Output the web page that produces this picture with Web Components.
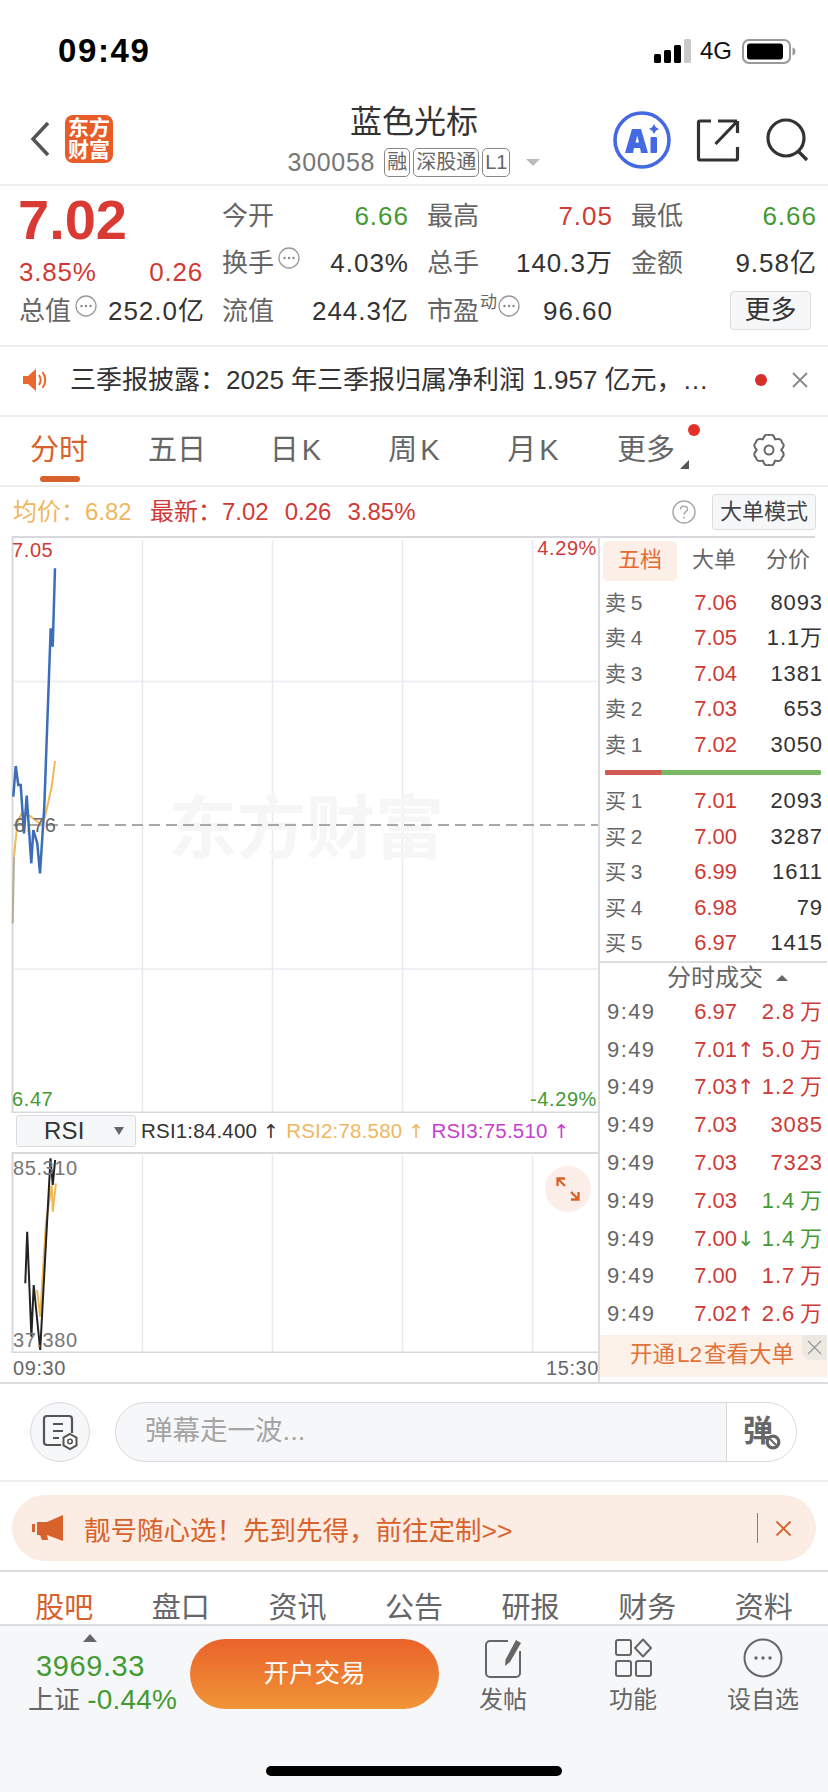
<!DOCTYPE html>
<html lang="zh">
<head>
<meta charset="utf-8">
<title>蓝色光标</title>
<style>
  html, body { margin: 0; padding: 0; background: #fff; }
  body { width: 828px; height: 1792px; overflow: hidden; font-family: "Liberation Sans", "Noto Sans CJK SC", sans-serif; color: #333; }
</style>
</head>
<body>
<status-bar></status-bar>
<stock-header></stock-header>
<quote-panel></quote-panel>
<notice-bar></notice-bar>
<period-tabs></period-tabs>
<info-row></info-row>
<chart-area>
  <trend-chart slot="left"></trend-chart>
  <order-panel slot="right"></order-panel>
</chart-area>
<comment-bar></comment-bar>
<promo-banner></promo-banner>
<section-tabs></section-tabs>
<bottom-bar></bottom-bar>

<script>
const RED = '#cf3a36';
const GREEN = '#449a33';
const ORANGE = '#d8622b';
const FONT = `"Liberation Sans", "Noto Sans CJK SC", sans-serif`;
const ARROW = `"DejaVu Sans", sans-serif`;

// base: pone estilos + markup en el shadow root
class ShadowPart extends HTMLElement {
    connectedCallback() {
        if (!this.shadowRoot) this.attachShadow({ mode: 'open' });
        this.shadowRoot.innerHTML = `<style>*{box-sizing:border-box} :host{display:block;box-sizing:border-box;font-family:${FONT};}${this.css()}</style>${this.html()}`;
    }
    css() { return ''; }
    html() { return ''; }
}

class StatusBar extends ShadowPart {
    css() { return `
        :host { height: 96px; display: flex; align-items: flex-start; justify-content: space-between; padding: 33px 32px 0 58px; }
        .time { font-size: 33px; font-weight: 700; color: #000; line-height: 36px; letter-spacing: 1.6px; }
        .right { display: flex; align-items: center; gap: 9px; height: 36px; }
        .net { font-size: 24px; color: #111; width: 33px; }
    `; }
    html() { return `
        <div class="time">09:49</div>
        <div class="right">
            <svg width="37" height="25" viewBox="0 0 37 25"><rect x="0" y="15" width="7" height="9" rx="1.5" fill="#000"/><rect x="10" y="11" width="7" height="13" rx="1.5" fill="#000"/><rect x="20" y="6" width="7" height="18" rx="1.5" fill="#000"/><rect x="30" y="0" width="7" height="24" rx="1.5" fill="#c9c9c9"/></svg>
            <span class="net">4G</span>
            <svg width="54" height="25" viewBox="0 0 54 25"><rect x="1" y="1" width="47" height="23" rx="6" fill="none" stroke="#999" stroke-width="2"/><rect x="5" y="4.5" width="36" height="16" rx="3" fill="#000"/><path d="M50.5 8.5c2 .5 3 2 3 4s-1 3.500-3 4z" fill="#999"/></svg>
        </div>
    `; }
}

class StockHeader extends ShadowPart {
    css() { return `
        :host { height: 90px; border-bottom: 2px solid #eee; display: flex; padding: 0 18px 0 28px; }
        .left { display: flex; align-items: center; gap: 13px; width: 182px; height: 88px; margin-top: -1px; }
        .logo { width: 48px; height: 48px; background: #e85c29; border-radius: 8px; color: #fff; font-size: 21px; line-height: 22px; font-weight: 700; text-align: center; padding-top: 2px; }
        .mid { flex: 1; text-align: center; }
        .title { font-size: 32px; line-height: 44px; color: #333; margin-top: 4px; }
        .sub { display: flex; align-items: center; justify-content: center; gap: 3px; height: 34px; margin-top: 1px; font-size: 25px; color: #777; letter-spacing: .7px; }
        .tag { border: 1px solid #888; border-radius: 5px; height: 29px; line-height: 26px; padding: 0 2px; font-size: 20px; color: #666; letter-spacing: 0; }
        .code { margin-right: 6px; }
        .caret { width: 0; height: 0; border: 7px solid transparent; border-top: 7px solid #bbb; border-bottom: 0; margin-left: 13px; }
        .right { width: 192px; height: 88px; }
        .right svg { overflow: visible; }
    `; }
    html() { return `
        <div class="left">
            <svg width="24" height="36" viewBox="0 0 24 36"><path d="M20 2 5 18l15 16" fill="none" stroke="#555" stroke-width="3.5"/></svg>
            <div class="logo">东方<br>财富</div>
        </div>
        <div class="mid">
            <div class="title">蓝色光标</div>
            <div class="sub"><span class="code">300058</span><span class="tag">融</span><span class="tag">深股通</span><span class="tag">L1</span><span class="caret"></span></div>
        </div>
        <div class="right">
            <svg width="192" height="88" viewBox="0 0 192 88">
                <circle cx="24" cy="44" r="27" fill="none" stroke="#4569e2" stroke-width="3.600"/>
                <path d="M7 57 14 33h9l7 24h-7l-1-5h-6l-1 5zM17.500 46.500h3.500l-1.800-7z" fill="#4569e2" fill-rule="evenodd"/>
                <rect x="32.500" y="41" width="6.500" height="16" rx="1" fill="#4569e2"/>
                <path d="M36 28l1.800 3.200 3.200 1.800-3.200 1.800-1.800 3.200-1.800-3.200-3.200-1.800 3.200-1.800z" fill="#4569e2"/>
                <path d="M93 25H82a1.500 1.500 0 0 0-1.500 1.500v36a1.500 1.500 0 0 0 1.500 1.500h36a1.500 1.500 0 0 0 1.500-1.500V51" fill="none" stroke="#333" stroke-width="3.200"/>
                <path d="M119.500 25v12M100 25h19M119.500 25l-22 23" fill="none" stroke="#333" stroke-width="3.200"/>
                <circle cx="168" cy="42" r="18" fill="none" stroke="#333" stroke-width="3.200"/>
                <path d="M180 55l9 9" stroke="#333" stroke-width="3.200"/>
            </svg>
        </div>
    `; }
}

const dots = `<svg class="dots" width="22" height="22" viewBox="0 0 22 22"><circle cx="11" cy="11" r="10" fill="none" stroke="#999" stroke-width="1.300"/><circle cx="6.500" cy="11" r="1.200" fill="#888"/><circle cx="11" cy="11" r="1.200" fill="#888"/><circle cx="15.500" cy="11" r="1.200" fill="#888"/></svg>`;

class QuotePanel extends ShadowPart {
    css() { return `
        :host { height: 161px; border-bottom: 2px solid #eee; display: flex; padding-left: 19px; font-size: 26px; line-height: 32px; }
        .left { width: 184px; }
        .price { font-size: 56px; font-weight: 700; color: #d93a33; line-height: 68px; height: 68px; margin-left: -1px; }
        .chg { display: flex; justify-content: space-between; color: ${RED}; height: 36px; line-height: 36px; letter-spacing: .8px; }
        .total { display: flex; align-items: center; height: 42px; }
        .grid { display: grid; grid-template-columns: 185px 184px 184px; column-gap: 20px; grid-auto-rows: 47.5px; padding-top: 6px; margin-left: 19px; }
        .cell { display: flex; align-items: center; }
        .lab { color: #666; }
        .val { margin-left: auto; margin-right: -2px; color: #333; letter-spacing: 1px; }
        .dots { margin: -10px 0 0 4px; }
        .sup { font-size: 17px; color: #666; margin: -15px 0 0 1px; }
        .more { margin-left: auto; margin-right: 4px; width: 81px; height: 39px; line-height: 36px; text-align: center; background: #f6f7f9; border: 1px solid #ddd; border-radius: 4px; color: #333; }
    `; }
    html() {
        const c = (l, v, color) => `<div class="cell"><span class="lab">${l}</span><span class="val" style="color:${color || '#333'}">${v}</span></div>`;
        return `
        <div class="left">
            <div class="price">7.02</div>
            <div class="chg"><span>3.85%</span><span>0.26</span></div>
            <div class="total"><span class="lab">总值</span>${dots}<span class="val">252.0亿</span></div>
        </div>
        <div class="grid">
            ${c('今开', '6.66', GREEN)}${c('最高', '7.05', RED)}${c('最低', '6.66', GREEN)}
            <div class="cell"><span class="lab">换手</span>${dots}<span class="val">4.03%</span></div>
            ${c('总手', '140.3万')}${c('金额', '9.58亿')}
            ${c('流值', '244.3亿')}
            <div class="cell"><span class="lab">市盈</span><span class="sup">动</span>${dots.replace('class="dots"', 'class="dots" style="margin-left:1px"')}<span class="val">96.60</span></div>
            <div class="cell"><span class="more">更多</span></div>
        </div>
    `; }
}

class NoticeBar extends ShadowPart {
    css() { return `
        :host { height: 70px; border-bottom: 2px solid #eee; display: flex; align-items: center; padding: 0 19px 3px 22px; font-size: 26px; line-height: 34px; color: #333; }
        .txt { margin-left: 22px; flex: 1; white-space: nowrap; }
        .dot { width: 12px; height: 12px; border-radius: 50%; background: #d92f2a; margin-right: 24px; }
    `; }
    html() { return `
        <svg width="26" height="26" viewBox="0 0 26 26"><path d="M1 9h5l8-7v22l-8-7H1z" fill="#e8682f"/><path d="M17 8c2 3 2 7 0 10M20.500 5c3.500 5 3.500 11 0 16" fill="none" stroke="#e8682f" stroke-width="2"/></svg>
        <span class="txt">三季报披露：2025 年三季报归属净利润 1.957 亿元，…</span>
        <span class="dot"></span>
        <svg width="18" height="18" viewBox="0 0 18 18"><path d="M2 2l14 14M16 2 2 16" stroke="#888" stroke-width="1.800"/></svg>
    `; }
}

// engranaje de 6 lóbulos, radio alterno suavizado
function gearPath() {
    const pt = (r, deg) => {
        const a = deg * Math.PI / 180;
        return `${(16 + r * Math.cos(a)).toFixed(1)} ${(16 + r * Math.sin(a)).toFixed(1)}`;
    };
    let d = `M${pt(12.2, 0)}`;
    for (let i = 0; i < 6; i++) {
        const s = i * 60;
        d += `Q${pt(17.5, s + 16)} ${pt(15, s + 30)}Q${pt(17.5, s + 44)} ${pt(12.2, s + 60)}`;
    }
    return d + 'Z';
}

class PeriodTabs extends ShadowPart {
    css() { return `
        :host { height: 70px; border-bottom: 2px solid #eee; display: grid; grid-template-columns: 118px 118px 119px 118px 120px 106px 1fr; align-items: center; font-size: 29px; color: #666; padding-bottom: 2px; }
        .t { text-align: center; position: relative; line-height: 40px; word-spacing: -5px; }
        .on { color: ${ORANGE}; }
        .on::after { content: ""; position: absolute; left: 40px; top: 46px; width: 40px; height: 6px; border-radius: 3px; background: ${ORANGE}; }
        .badge { position: absolute; left: 95px; top: -6px; width: 12px; height: 12px; border-radius: 50%; background: #e5302a; }
        .corner { position: absolute; left: 87px; top: 30px; width: 0; height: 0; border-left: 9px solid transparent; border-bottom: 9px solid #555; }
        svg { justify-self: start; margin-left: 54px; }
    `; }
    html() { return `
        <div class="t on">分时</div><div class="t">五日</div><div class="t">日 K</div><div class="t">周 K</div><div class="t">月 K</div>
        <div class="t">更多<i class="badge"></i><i class="corner"></i></div>
        <svg width="32" height="32" viewBox="0 0 32 32"><path d="${gearPath()}" fill="none" stroke="#666" stroke-width="2" stroke-linejoin="round"/><circle cx="16" cy="16" r="4.500" fill="none" stroke="#666" stroke-width="2"/></svg>
    `; }
}

class InfoRow extends ShadowPart {
    css() { return `
        :host { height: 49px; display: flex; align-items: center; padding: 0 12px 0 13px; font-size: 24px; line-height: 30px; color: ${RED}; }
        .avg { color: #efb75f; width: 137px; white-space: nowrap; }
        .n { margin-left: 16px; }
        .sp { flex: 1; }
        .btn { width: 104px; height: 36px; line-height: 33px; text-align: center; background: #f6f7f9; border: 1px solid #ddd; border-radius: 4px; color: #444; font-size: 22px; margin-left: 16px; }
    `; }
    html() { return `
        <span class="avg">均价：6.82</span><span>最新：7.02</span><span class="n">0.26</span><span class="n">3.85%</span>
        <span class="sp"></span>
        <svg width="24" height="24" viewBox="0 0 24 24"><circle cx="12" cy="12" r="11" fill="none" stroke="#aaa" stroke-width="1.500"/><path d="M8.500 9.500c0-2 1.500-3.300 3.500-3.300s3.500 1.300 3.500 3c0 2.800-3.500 2.600-3.500 5.300" fill="none" stroke="#aaa" stroke-width="1.500"/><circle cx="12" cy="17.500" r="1" fill="#aaa"/></svg>
        <span class="btn">大单模式</span>
    `; }
}

class ChartArea extends ShadowPart {
    css() { return `:host { display: flex; height: 846px; } ::slotted([slot=left]) { width: 599px; } ::slotted([slot=right]) { width: 229px; }`; }
    html() { return `<slot name="left"></slot><slot name="right"></slot>`; }
}

class TrendChart extends ShadowPart {
    css() { return `
        .main, .rsi { position: relative; }
        .main { height: 577px; }
        .rsi { height: 201px; }
        svg { display: block; }
        .lb { position: absolute; font-size: 20px; line-height: 24px; white-space: nowrap; letter-spacing: .6px; }
        .head { height: 39px; display: flex; align-items: center; padding: 0 0 3px 16px; font-size: 20.500px; letter-spacing: .2px; white-space: nowrap; }
        .sel { width: 120px; height: 32px; background: #f6f7f9; border: 1px solid #ddd; border-radius: 3px; font-size: 24px; color: #333; display: flex; align-items: center; padding-left: 27px; margin-right: 5px; position: relative; }
        .sel::after { content: ""; position: absolute; right: 11px; top: 11px; border: 5px solid transparent; border-top: 8px solid #666; border-bottom: 0; }
        .head span { margin-right: 7px; }
        .head b { font: 400 19px ${ARROW}; }
        .axis { height: 29px; display: flex; justify-content: space-between; padding: 4px 0 0 13px; font-size: 20px; color: #666; letter-spacing: .6px; }
        .exp { position: absolute; left: 545px; top: 14px; width: 46px; height: 46px; border-radius: 50%; background: #fbeee8; display: flex; align-items: center; justify-content: center; }
    `; }
    html() {
        const xs = [142.5, 272.5, 402.5, 532.5];
        const vert = (h, t) => xs.map(x => `<path d="M${x} ${t}V${h}" stroke="#e9e9ef" stroke-width="1.500"/>`).join('');
        const line = (pts, oy, sx, sy) => pts.map(p => `${(p[0] / sx).toFixed(1)},${(p[1] / sy + oy).toFixed(1)}`).join(' ');
        // trazos tomados del recorte ampliado
        const price = line([[40,800],[47,708],[55,765],[62,765],[72,910],[80,797],[94,1000],[100,900],[112,940],[120,1030],[133,830],[152,295],[158,350],[165,115]], -6, 3, 3);
        const avg = line([[42,980],[52,880],[65,850],[90,858],[125,885],[135,860],[155,770],[165,693]], -6, 3, 3);
        const avg0 = line([[38,1180],[42,980]], -6, 3, 3);
        const k = 1568 / 600;
        const r1 = line([[66,580],[71,425],[82,740],[88,585],[105,780],[132,205],[138,285],[144,210]], -62, k, 3);
        const r2 = line([[97,600],[105,680],[120,400],[135,285],[138,365],[146,280]], -62, k, 3);
        return `
        <div class="main">
            <svg width="599" height="577" viewBox="0 0 599 577">
                <path d="M13 145.500H598M13 433H598" stroke="#f0f0f4" stroke-width="2"/>
                ${vert(577, 4)}
                <text x="168" y="317" font-size="69" font-weight="700" fill="#f6f6f6" font-family="Noto Sans CJK SC">东方财富</text>
                <path d="M13 289H598" stroke="#a8a8a8" stroke-width="2" stroke-dasharray="11 6"/>
                <path d="M12.500 0V577M12 1H599M12 576.500H599" fill="none" stroke="#d9d9dd" stroke-width="2"/>
                <polyline points="${avg0}" fill="none" stroke="#b5ad96" stroke-width="2"/>
                <polyline points="${avg}" fill="none" stroke="#f0b955" stroke-width="2"/>
                <polyline points="${price}" fill="none" stroke="#3b6db8" stroke-width="2.500"/>
            </svg>
            <span class="lb" style="left:12px;top:2px;color:${RED}">7.05</span>
            <span class="lb" style="right:2px;top:0;color:${RED}">4.29%</span>
            <span class="lb" style="left:14px;top:277px;color:#666;letter-spacing:1px">6.76</span>
            <span class="lb" style="left:12px;top:551px;color:${GREEN}">6.47</span>
            <span class="lb" style="right:2px;top:551px;color:${GREEN}">-4.29%</span>
        </div>
        <div class="head">
            <div class="sel">RSI</div>
            <span style="color:#333">RSI1:84.400 <b>↑</b></span><span style="color:#efb75f">RSI2:78.580 <b>↑</b></span><span style="color:#c63fd1">RSI3:75.510 <b>↑</b></span>
        </div>
        <div class="rsi">
            <svg width="599" height="201" viewBox="0 0 599 201">
                ${vert(200, 3)}
                <path d="M12.500 0V201M12 1H599M12 200.500H599" fill="none" stroke="#d9d9dd" stroke-width="2"/>
                <polyline points="${r2}" fill="none" stroke="#f0b955" stroke-width="2"/>
                <polyline points="${r1}" fill="none" stroke="#222" stroke-width="2"/>
            </svg>
            <span class="lb" style="left:13px;top:4px;color:#777">85.310</span>
            <span class="lb" style="left:13px;top:176px;color:#777">37.380</span>
            <div class="exp"><svg width="24" height="24" viewBox="0 0 24 24"><path d="M1.500 9V1.500H9M2 2l7 7M22.500 15v7.500H15M22 22l-7-7" fill="none" stroke="${ORANGE}" stroke-width="2.300"/></svg></div>
        </div>
        <div class="axis"><span>09:30</span><span>15:30</span></div>
    `; }
}

class OrderPanel extends ShadowPart {
    css() { return `
        :host { border-left: 2px solid #dcdcdf; margin-left: -1px; font-size: 22px; line-height: 28px; }
        .tabs { height: 49px; border-top: 2px solid #d9d9dd; margin-right: 12px; display: flex; padding: 3px 0 0 3px; font-size: 22px; color: #666; }
        .tabs span { flex: none; width: 74px; height: 40px; line-height: 38px; text-align: center; border-radius: 5px; }
        .tabs .on { background: #fcefe8; color: #e8682f; }
        .row { height: 35.500px; display: grid; grid-template-columns: 60px 72px 1fr; align-items: center; padding: 0 4px 0 5px; }
        .lab { color: #666; white-space: nowrap; font-size: 21px; word-spacing: -1px; }
        .p { text-align: right; color: ${RED}; }
        .v { text-align: right; color: #333; white-space: nowrap; word-spacing: -2px; letter-spacing: .9px; }
        .bar { height: 21px; padding: 7px 6px 0 5px; }
        .bar div { height: 5px; border-radius: 1px; background: linear-gradient(100deg, #d15a52 26%, #7ab863 26.500%); }
        .title { height: 32px; border-top: 2px solid #dcdcdf; display: flex; align-items: center; justify-content: center; gap: 13px; font-size: 24px; color: #666; padding: 0 0 0 28px; }
        .title i { width: 0; height: 0; border: 6px solid transparent; border-bottom: 6px solid #666; border-top: 0; }
        .tick { height: 37.800px; display: grid; grid-template-columns: 62px 68px 17px 1fr; align-items: center; padding: 0 4px 0 7px; }
        .t { color: #666; letter-spacing: 1.4px; }
        .ar { font: 400 21px/28px ${ARROW}; text-align: right; white-space: nowrap; }
        .l2 { position: relative; margin-top: 2px; height: 42px; background: #fcf1e9; color: #e0723a; font-size: 22.500px; line-height: 40px; padding-left: 30px; white-space: nowrap; }
        .l2 b { font-weight: 400; margin: 0 2px; }
        .cl { position: absolute; right: 0; top: 0; width: 25px; height: 25px; background: #eee8e2; border-bottom-left-radius: 9px; display: flex; align-items: center; justify-content: center; }
    `; }
    html() {
        const book = (rows) => rows.map(r => `<div class="row"><span class="lab">${r[0]}</span><span class="p">${r[1]}</span><span class="v">${r[2]}</span></div>`).join('');
        const sells = [['卖 5', '7.06', '8093'], ['卖 4', '7.05', '1.1万'], ['卖 3', '7.04', '1381'], ['卖 2', '7.03', '653'], ['卖 1', '7.02', '3050']];
        const buys = [['买 1', '7.01', '2093'], ['买 2', '7.00', '3287'], ['买 3', '6.99', '1611'], ['买 4', '6.98', '79'], ['买 5', '6.97', '1415']];
        const ticks = [
            ['6.97', '', '2.8 万', RED], ['7.01', '↑', '5.0 万', RED], ['7.03', '↑', '1.2 万', RED],
            ['7.03', '', '3085', RED], ['7.03', '', '7323', RED], ['7.03', '', '1.4 万', GREEN],
            ['7.00', '↓', '1.4 万', GREEN], ['7.00', '', '1.7 万', RED], ['7.02', '↑', '2.6 万', RED]
        ];
        return `
        <div class="tabs"><span class="on">五档</span><span>大单</span><span>分价</span></div>
        ${book(sells)}
        <div class="bar"><div></div></div>
        ${book(buys)}
        <div class="title"><span>分时成交</span><i></i></div>
        ${ticks.map(t => `<div class="tick"><span class="t">9:49</span><span class="p">${t[0]}</span><span class="ar" style="color:${t[1] === '↓' ? GREEN : RED}">${t[1]}</span><span class="v" style="color:${t[3]}">${t[2]}</span></div>`).join('')}
        <div class="l2">开通<b>L2</b>查看大单<span class="cl"><svg width="15" height="15" viewBox="0 0 15 15"><path d="M1 1l13 13M14 1 1 14" stroke="#999" stroke-width="1.300"/></svg></span></div>
    `; }
}

class CommentBar extends ShadowPart {
    css() { return `
        :host { height: 100px; border-top: 2px solid #dcdcdf; border-bottom: 2px solid #eee; display: flex; align-items: center; padding: 0 31px 0 30px; gap: 25px; }
        .circle { width: 60px; height: 60px; border-radius: 50%; border: 1px solid #d8d8dc; background: #f6f7f9; display: flex; align-items: center; justify-content: center; }
        .pill { flex: 1; height: 60px; border-radius: 30px; border: 1.500px solid #d8d8dc; background: #f6f7f9; display: flex; overflow: hidden; }
        .ph { flex: 1; font-size: 27.500px; color: #a5a5a5; line-height: 55px; padding-left: 29px; }
        .send { width: 70px; background: #fff; border-left: 1px solid #d8d8dc; position: relative; font-size: 30px; font-weight: 700; color: #666; line-height: 55px; padding-left: 16px; }
        .send svg { position: absolute; left: 38px; top: 31px; }
    `; }
    html() { return `
        <div class="circle"><svg width="38" height="38" viewBox="0 0 38 38"><path d="M20 32H6a3 3 0 0 1-3-3V6a3 3 0 0 1 3-3h22a3 3 0 0 1 3 3v14" fill="none" stroke="#555" stroke-width="2.200"/><path d="M12 11h10M12 18h10M12 25h6" stroke="#555" stroke-width="2.200"/><path d="M29 21l6.500 3.700v7.600L29 36l-6.500-3.700v-7.600z" fill="#fff" stroke="#555" stroke-width="2"/><circle cx="29" cy="28.500" r="2.200" fill="none" stroke="#555" stroke-width="1.600"/></svg></div>
        <div class="pill">
            <span class="ph">弹幕走一波...</span>
            <span class="send">弹<svg width="16" height="16" viewBox="0 0 16 16"><circle cx="8" cy="8" r="7.500" fill="#666"/><circle cx="8" cy="8" r="4.200" fill="#fff"/><path d="M5 5l6 6" stroke="#666" stroke-width="2"/></svg></span>
        </div>
    `; }
}

class PromoBanner extends ShadowPart {
    css() { return `
        :host { height: 90px; border-bottom: 2px solid #dcdcdf; padding: 13px 12px 0; }
        .in { height: 66px; border-radius: 33px; background: #fbece4; display: flex; align-items: center; padding: 0 24px 0 20px; color: ${ORANGE}; font-size: 26.500px; }
        .txt { flex: 1; margin-left: 20px; white-space: nowrap; }
        .bar { width: 1px; height: 30px; background: ${ORANGE}; margin-right: 17px; }
    `; }
    html() { return `<div class="in">
        <svg width="32" height="28" viewBox="0 0 32 28"><path d="M0 10h3v8H0zM5 8h10L31 1v26L15 21l1 5h-6l-2-5H5z" fill="${ORANGE}"/></svg>
        <span class="txt">靓号随心选！先到先得，前往定制&gt;&gt;</span>
        <span class="bar"></span>
        <svg width="17" height="17" viewBox="0 0 17 17"><path d="M1.500 1.500l14 14M15.500 1.500l-14 14" stroke="${ORANGE}" stroke-width="1.800"/></svg>
    </div>`; }
}

class SectionTabs extends ShadowPart {
    css() { return `
        :host { height: 54px; border-bottom: 2px solid #dcdcdf; display: flex; padding: 20px 6px 0; font-size: 29px; color: #666; line-height: 32px; }
        span { flex: 1; text-align: center; }
        .on { color: ${ORANGE}; }
    `; }
    html() { return ['股吧', '盘口', '资讯', '公告', '研报', '财务', '资料'].map((t, i) => `<span class="${i ? '' : 'on'}">${t}</span>`).join(''); }
}

class BottomBar extends ShadowPart {
    css() { return `
        :host { height: 166px; background: #f6f7f9; position: relative; display: flex; align-items: flex-start; }
        .idx { width: 190px; padding-top: 8px; white-space: nowrap; }
        .tri { display: block; width: 0; height: 0; margin-left: 83px; border: 7px solid transparent; border-bottom: 8px solid #666; border-top: 0; }
        .num { color: ${GREEN}; font-size: 29px; line-height: 36px; margin: 6px 0 0 36px; letter-spacing: .6px; }
        .sub { font-size: 26px; line-height: 32px; color: #666; margin-left: 28px; }
        .sub b { color: ${GREEN}; font-weight: 400; font-size: 28px; letter-spacing: .2px; }
        .btn { width: 249px; height: 70px; margin-top: 13px; border-radius: 35px; background: linear-gradient(#ea622b, #f09537); color: #fff; font-size: 25.500px; text-align: center; line-height: 68px; }
        .items { display: flex; margin-left: -1px; }
        .it { width: 130px; text-align: center; padding-top: 12px; font-size: 24px; color: #666; }
        .it svg { display: block; margin: 0 auto; }
        .it span { display: block; line-height: 32px; margin-top: 6px; }
        .home { position: absolute; left: 266px; top: 140px; width: 296px; height: 10px; border-radius: 5px; background: #000; }
    `; }
    html() { return `
        <div class="idx"><i class="tri"></i><div class="num">3969.33</div><div class="sub">上证 <b>-0.44%</b></div></div>
        <div class="btn">开户交易</div>
        <div class="items">
            <div class="it"><svg width="40" height="40" viewBox="0 0 40 40"><path d="M25 3H7a4 4 0 0 0-4 4v28a4 4 0 0 0 4 4h26a4 4 0 0 0 4-4V13" fill="none" stroke="#666" stroke-width="2"/><path d="M33 2l5 3-11 19-5 4 .6-6.500z" fill="#666"/></svg><span>发帖</span></div>
            <div class="it"><svg width="40" height="40" viewBox="0 0 40 40"><g fill="none" stroke="#666" stroke-width="2"><rect x="3" y="2" width="15" height="15" rx="2"/><rect x="3" y="23" width="15" height="15" rx="2"/><rect x="23" y="23" width="15" height="15" rx="2"/><path d="M30 1.500l8 8.500-8 8.500-8-8.500z" stroke-linejoin="round"/></g></svg><span>功能</span></div>
            <div class="it"><svg width="40" height="40" viewBox="0 0 40 40"><circle cx="20" cy="20" r="18.500" fill="none" stroke="#666" stroke-width="2"/><circle cx="13" cy="20" r="1.700" fill="#666"/><circle cx="20" cy="20" r="1.700" fill="#666"/><circle cx="27" cy="20" r="1.700" fill="#666"/></svg><span>设自选</span></div>
        </div>
        <div class="home"></div>
    `; }
}

customElements.define('status-bar', StatusBar);
customElements.define('stock-header', StockHeader);
customElements.define('quote-panel', QuotePanel);
customElements.define('notice-bar', NoticeBar);
customElements.define('period-tabs', PeriodTabs);
customElements.define('info-row', InfoRow);
customElements.define('chart-area', ChartArea);
customElements.define('trend-chart', TrendChart);
customElements.define('order-panel', OrderPanel);
customElements.define('comment-bar', CommentBar);
customElements.define('promo-banner', PromoBanner);
customElements.define('section-tabs', SectionTabs);
customElements.define('bottom-bar', BottomBar);
</script>
</body>
</html>
